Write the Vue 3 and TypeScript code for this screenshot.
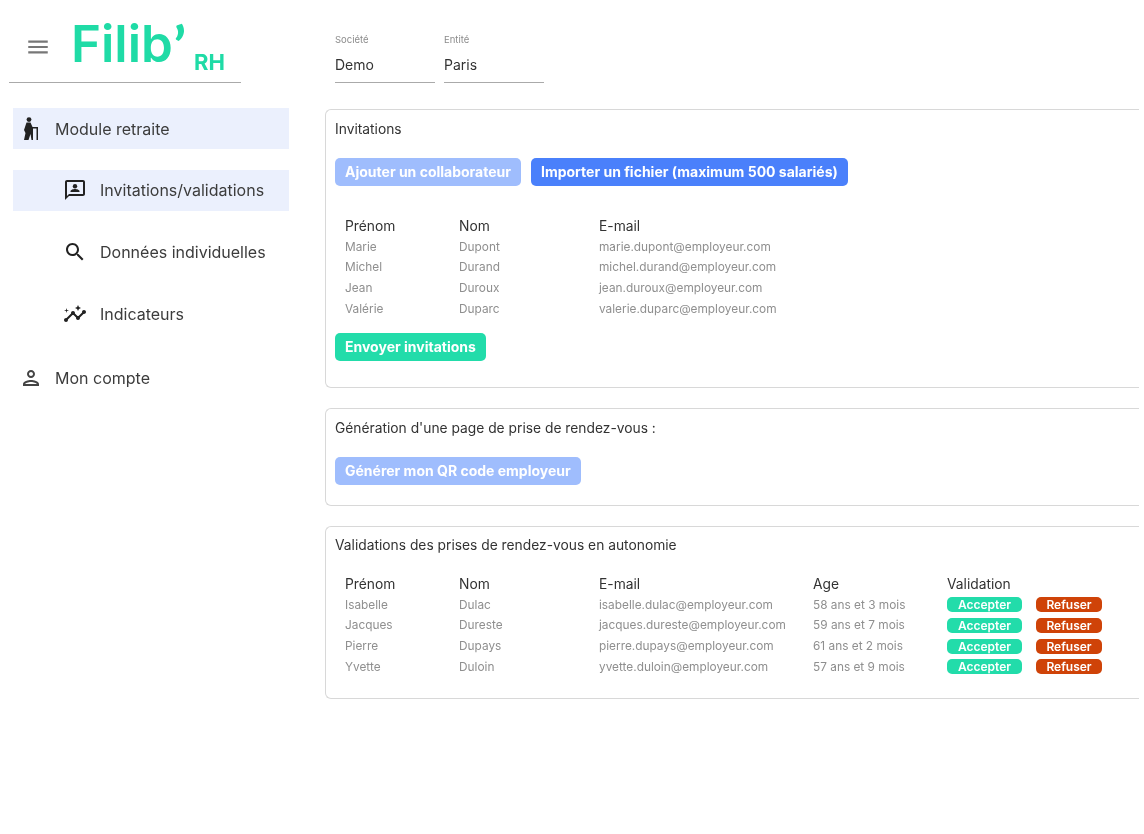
<script setup lang="ts">
interface Person { first: string; last: string; email: string; age?: string }
const invites: Person[] = [
  { first: 'Marie', last: 'Dupont', email: 'marie.dupont@employeur.com' },
  { first: 'Michel', last: 'Durand', email: 'michel.durand@employeur.com' },
  { first: 'Jean', last: 'Duroux', email: 'jean.duroux@employeur.com' },
  { first: 'Valérie', last: 'Duparc', email: 'valerie.duparc@employeur.com' },
]
const validations: Person[] = [
  { first: 'Isabelle', last: 'Dulac', email: 'isabelle.dulac@employeur.com', age: '58 ans et 3 mois' },
  { first: 'Jacques', last: 'Dureste', email: 'jacques.dureste@employeur.com', age: '59 ans et 7 mois' },
  { first: 'Pierre', last: 'Dupays', email: 'pierre.dupays@employeur.com', age: '61 ans et 2 mois' },
  { first: 'Yvette', last: 'Duloin', email: 'yvette.duloin@employeur.com', age: '57 ans et 9 mois' },
]
</script>

<template>
  <div class="page">
    <aside class="side">
      <div class="brand">
        <svg class="burger" viewBox="0 0 24 24"><path d="M3 18h18v-2H3v2zm0-5h18v-2H3v2zm0-7v2h18V6H3z" /></svg>
        <span class="logo">Filib<i class="apos">’</i></span>
        <span class="logo-sub">RH</span>
      </div>
      <nav class="nav">
        <a class="item on">
          <svg viewBox="0 0 24 24"><circle cx="10" cy="2.600" r="2.400" /><path d="M7.500 5.500h4l2 4.500H19v13h-1.500V11.500H14V23h-1.500l-1-6-2 6H5l1.500-7L5 13z" /></svg>
          <span>Module retraite</span>
        </a>
        <a class="item sub on">
          <svg viewBox="0 0 24 24"><path d="M20 2H4c-1.100 0-2 .9-2 2v18l4-4h14c1.100 0 2-.9 2-2V4c0-1.100-.9-2-2-2zm0 14H6l-2 2V4h16v12z" /><circle cx="12" cy="8.200" r="2.200" /><path d="M7.500 14v-.8c0-1.400 2.900-2.200 4.500-2.200s4.500.8 4.500 2.200v.8h-9z" /></svg>
          <span>Invitations/validations</span>
        </a>
        <a class="item sub">
          <svg viewBox="0 0 24 24"><path d="M15.500 14h-.79l-.28-.27C15.410 12.590 16 11.110 16 9.500 16 5.910 13.090 3 9.500 3S3 5.910 3 9.500 5.910 16 9.500 16c1.610 0 3.090-.59 4.230-1.570l.27.28v.79l5 4.990L20.490 19l-4.990-5zm-6 0C7.010 14 5 11.990 5 9.500S7.010 5 9.500 5 14 7.010 14 9.500 11.990 14 9.500 14z" /></svg>
          <span>Données individuelles</span>
        </a>
        <a class="item sub">
          <svg viewBox="0 0 24 24"><path d="M21 8c-1.450 0-2.260 1.440-1.930 2.510l-3.550 3.560c-.3-.09-.74-.09-1.040 0l-2.550-2.550C12.270 10.450 11.460 9 10 9c-1.450 0-2.270 1.440-1.930 2.520l-4.560 4.550C2.440 15.740 1 16.550 1 18c0 1.100.9 2 2 2 1.450 0 2.260-1.440 1.930-2.510l4.550-4.560c.3.09.74.09 1.040 0l2.550 2.550C12.730 16.550 13.540 18 15 18c1.450 0 2.270-1.440 1.930-2.520l3.560-3.550c1.070.33 2.510-.48 2.510-1.930 0-1.100-.9-2-2-2z" /><path d="M15 9l.94-2.070L18 6l-2.060-.93L15 3l-.92 2.070L12 6l2.080.93zM3.500 11L4 9l2-.5L4 8l-.5-2L3 8l-2 .5L3 9z" /></svg>
          <span>Indicateurs</span>
        </a>
        <a class="item account">
          <svg viewBox="0 0 24 24"><path d="M12 6c1.100 0 2 .9 2 2s-.9 2-2 2-2-.9-2-2 .9-2 2-2m0 10c2.700 0 5.800 1.290 6 2H6c.23-.72 3.310-2 6-2m0-12C9.790 4 8 5.790 8 8s1.790 4 4 4 4-1.790 4-4-1.790-4-4-4zm0 10c-2.670 0-8 1.340-8 4v2h16v-2c0-2.660-5.330-4-8-4z" /></svg>
          <span>Mon compte</span>
        </a>
      </nav>
    </aside>

    <main class="main">
      <div class="selects">
        <div class="field"><label>Société</label><div class="value">Demo</div></div>
        <div class="field"><label>Entité</label><div class="value">Paris</div></div>
      </div>

      <section class="card first">
        <h2>Invitations</h2>
        <div class="actions">
          <button class="btn soft">Ajouter un collaborateur</button>
          <button class="btn blue">Importer un fichier (maximum 500 salariés)</button>
        </div>
        <div class="table">
          <div class="row head"><span>Prénom</span><span>Nom</span><span>E-mail</span></div>
          <div v-for="p in invites" :key="p.email" class="row">
            <span>{{ p.first }}</span><span>{{ p.last }}</span><span>{{ p.email }}</span>
          </div>
        </div>
        <button class="btn green">Envoyer invitations</button>
      </section>

      <section class="card second">
        <h2>Génération d'une page de prise de rendez-vous :</h2>
        <button class="btn soft">Générer mon QR code employeur</button>
      </section>

      <section class="card third">
        <h2>Validations des prises de rendez-vous en autonomie</h2>
        <div class="table wide">
          <div class="row head"><span>Prénom</span><span>Nom</span><span>E-mail</span><span>Age</span><span>Validation</span></div>
          <div v-for="p in validations" :key="p.email" class="row">
            <span>{{ p.first }}</span><span>{{ p.last }}</span><span>{{ p.email }}</span><span>{{ p.age }}</span>
            <span class="pills"><b class="pill ok">Accepter</b><b class="pill no">Refuser</b></span>
          </div>
        </div>
      </section>
    </main>
  </div>
</template>

<style>
html, body { background: #fff; overflow: hidden; }
</style>

<style scoped>
.page {
  display: flex;
  width: 1144px;
  height: 834px;
  overflow: hidden;
  font-family: Inter, "Liberation Sans", sans-serif;
  color: #333;
  background: #fff;
  filter: blur(0.6px);
}
.side { width: 325px; flex: none; padding: 0 36px 0 9px; box-sizing: border-box; }
.brand {
  display: flex;
  align-items: flex-start;
  width: 232px;
  height: 83px;
  box-sizing: border-box;
  border-bottom: 1.5px solid #aaa;
  padding-left: 16px;
}
.burger { width: 26px; height: 26px; margin-top: 34px; fill: #777; flex: none; }
.logo {
  margin: 14px 0 0 20px;
  font: 600 51px/60px Inter, sans-serif;
  color: #1fdba6;
  white-space: nowrap;
}
.apos { font: 900 54px/40px Lato, sans-serif; margin-left: 1px; vertical-align: -3px; }
.logo-sub {
  margin: 49px 0 0 auto;
  padding-right: 16px;
  font: 700 22px/26px Inter, sans-serif;
  color: #1fdba6;
}
.nav { display: flex; flex-direction: column; gap: 20.800px; margin: 25px 0 0 4px; }
.item {
  display: flex;
  align-items: center;
  gap: 12px;
  height: 41px;
  padding-left: 6px;
  font-size: 16px;
  color: #3c3c3c;
}
.item svg { width: 24px; height: 24px; flex: none; fill: #222; }
.item.sub { padding-left: 50px; gap: 13px; }
.item.on { background: #ebf0fd; }
.account { margin-top: 2.500px; }
.account svg { fill: #444; }
.main { flex: 1; min-width: 0; }
.selects { display: flex; gap: 9px; padding: 34px 0 0 10px; }
.field { width: 100px; height: 48px; border-bottom: 1.5px solid #aaa; }
.field label { display: block; font-size: 9.500px; line-height: 11px; color: #8c8c8c; }
.value { margin-top: 11px; font-size: 14px; line-height: 18px; color: #333; }
.card {
  width: 814px;
  box-sizing: border-box;
  padding: 10px 9px;
  border: 1.5px solid #d8d8d8;
  border-right: 0;
  border-radius: 6px 0 0 6px;
}
.card h2 { margin: 0; font-size: 13.800px; font-weight: 400; line-height: 18px; color: #333; }
.first { height: 279px; margin-top: 26px; }
.second { height: 98px; margin-top: 20px; }
.third { height: 173px; margin-top: 20px; padding-top: 9px; }
.actions { display: flex; gap: 10px; margin-top: 20px; }
.btn {
  display: block;
  height: 28px;
  padding: 0 10px;
  border: 0;
  border-radius: 5px;
  font: 700 14px/28px Inter, sans-serif;
  color: #fff;
}
.soft { background: #9fbdfd; }
.blue { background: #4a80fb; }
.green { background: #22dcaa; }
.second .btn { margin-top: 20px; }
.table { margin: 29px 0 14px 10px; }
.row {
  display: grid;
  grid-template-columns: 114px 140px 214px 134px;
  height: 20.600px;
  align-items: center;
  font-size: 11.850px;
  color: #8f8f8f;
}
.wide .row { grid-template-columns: 114px 140px 214px 134px 200px; }
.wide { margin-top: 19px; }
.row.head { height: 21.600px; font-size: 13.800px; color: #333; }
.pills { display: flex; gap: 14px; }
.pill {
  width: 75px;
  height: 15px;
  border-radius: 5px;
  font-size: 12px;
  font-weight: 600;
  line-height: 15px;
  text-align: center;
  color: #fff;
}
.pill.ok { background: #22dcaa; }
.pill.no { width: 66px; background: #cf4308; }
</style>
